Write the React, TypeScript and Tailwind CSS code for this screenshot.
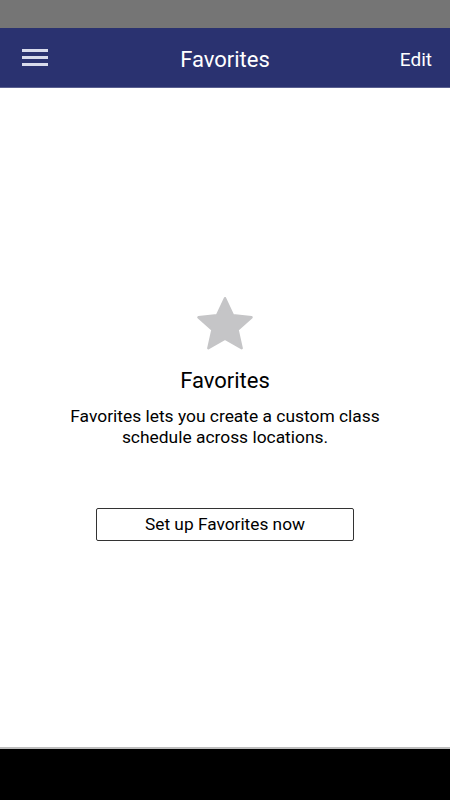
import React from 'react';

const StarIcon: React.FC = () => (
  <svg width="58" height="56" viewBox="0 0 24 23" className="block">
    <path
      d="M12 0.8l3.3 7.1 7.7 0.8-5.8 5.2 1.7 7.6L12 17.6l-6.9 3.9 1.7-7.6L1 8.7l7.7-0.8z"
      fill="#c5c5c7"
      stroke="#c5c5c7"
      strokeWidth="1"
      strokeLinejoin="round"
    />
  </svg>
);

const App: React.FC = () => {
  return (
    <div
      className="flex flex-col w-[450px] h-[800px] bg-white overflow-hidden"
      style={{ fontFamily: 'Roboto, "Liberation Sans", sans-serif' }}
    >
      {/* Status bar */}
      <div className="h-[28px] bg-[#757575] shrink-0" />

      {/* Header */}
      <div className="h-[60px] bg-[#2a3270] shrink-0 flex items-center px-[22px] border-b border-[#5a6090]">
        <div className="w-[40px] flex">
          <div className="flex flex-col gap-[4px] w-[26px]">
            <span className="block h-[3px] bg-[#d8dbec]" />
            <span className="block h-[3px] bg-[#d8dbec]" />
            <span className="block h-[3px] bg-[#d8dbec]" />
          </div>
        </div>
        <h1 className="flex-1 text-center text-white text-[22px] leading-none pt-[5px]">Favorites</h1>
        <div className="w-[40px] flex justify-end">
          <span className="text-white text-[19px] leading-none pt-[3px] -mr-[4px]">Edit</span>
        </div>
      </div>

      {/* Content */}
      <div className="flex-1 flex flex-col items-center pt-[208px]">
        <StarIcon />
        <h2 className="text-black text-[22px] mt-[15px] leading-[27px]">Favorites</h2>
        <p className="text-black text-[17.4px] leading-[21px] text-center mt-[12px] w-[340px]">
          Favorites lets you create a custom class schedule across locations.
        </p>
        <button className="mt-[60px] w-[258px] h-[33px] border border-[#333] rounded-[2px] text-[17.3px] leading-none pt-[1px] text-black bg-white">
          Set up Favorites now
        </button>
      </div>

      {/* Nav bar */}
      <div className="h-[53px] bg-black shrink-0 border-t-2 border-[#bdbdbd]" />
    </div>
  );
};

export default App;
